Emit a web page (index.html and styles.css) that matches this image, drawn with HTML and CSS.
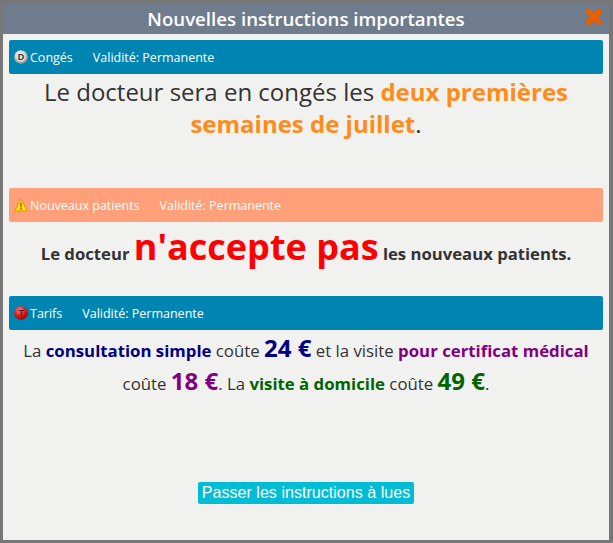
FILE: index.html
```html
<!DOCTYPE html>
<html lang="fr">
<head>
<meta charset="utf-8">
<title>Nouvelles instructions importantes</title>
<link rel="stylesheet" href="styles.css">
</head>
<body>
<div class="modal">
  <header class="title-bar">
    <h1 class="title">Nouvelles instructions importantes</h1>
    <svg class="close" viewBox="0 0 22 22" width="22" height="22" aria-label="Fermer">
      <path d="M2.5 6 L6 2.5 L11 7.5 L16 2.5 L19.5 6 L14.5 11 L19.5 16 L16 19.5 L11 14.5 L6 19.5 L2.5 16 L7.5 11 Z" fill="#ee5f00" stroke="#c9651f" stroke-width="1.2" stroke-linejoin="round"/>
    </svg>
  </header>
  <main class="content">
    <section class="notice notice-first">
      <div class="bar bar-blue">
        <span class="label">
          <svg class="ico" viewBox="0 0 14 14" width="14" height="14"><defs><radialGradient id="g1" cx="40%" cy="30%" r="75%"><stop offset="0" stop-color="#ffffff"/><stop offset="1" stop-color="#8f8f8f"/></radialGradient></defs><circle cx="7" cy="7" r="6.8" fill="url(#g1)"/><circle cx="7" cy="7" r="4.5" fill="#e4e4e4"/><text x="7" y="10.2" class="ico-letter">D</text></svg>
          Congés
        </span>
        <span class="validity">Validité: Permanente</span>
      </div>
      <p class="msg msg-large">Le docteur sera en congés les <strong class="orange">deux premières semaines de juillet</strong>.</p>
    </section>
    <section class="notice notice-second">
      <div class="bar bar-salmon">
        <span class="label">
          <svg class="ico" viewBox="0 0 14 14" width="14" height="14"><path d="M7 1 L13.4 13 H0.6 Z" fill="#ffe000" stroke="#ea8f10" stroke-width="1" stroke-linejoin="round"/><path d="M6.3 5 H7.7 L7.4 9.5 H6.6 Z M6.3 10.3 H7.7 V11.7 H6.3 Z" fill="#6b4a00"/></svg>
          Nouveaux patients
        </span>
        <span class="validity">Validité: Permanente</span>
      </div>
      <p class="msg msg-bold">Le docteur <span class="huge">n'accepte pas</span> les nouveaux patients.</p>
    </section>
    <section class="notice">
      <div class="bar bar-blue">
        <span class="label">
          <svg class="ico" viewBox="0 0 14 14" width="14" height="14"><defs><radialGradient id="g2" cx="40%" cy="30%" r="75%"><stop offset="0" stop-color="#ff7a7a"/><stop offset="0.6" stop-color="#e01010"/><stop offset="1" stop-color="#8c0808"/></radialGradient></defs><circle cx="7" cy="7" r="6.8" fill="url(#g2)"/><text x="7" y="10.2" class="ico-letter">T</text></svg>
          Tarifs
        </span>
        <span class="validity">Validité: Permanente</span>
      </div>
      <p class="msg msg-prices">La <strong class="navy">consultation simple</strong> coûte <strong class="price navy">24 €</strong> et la visite <strong class="purple">pour certificat médical</strong> coûte <strong class="price purple">18 €</strong>. La <strong class="green">visite à domicile</strong> coûte <strong class="price green">49 €</strong>.</p>
    </section>
    <div class="actions">
      <button class="skip" type="button">Passer les instructions à lues</button>
    </div>
  </main>
</div>
</body>
</html>
```
FILE: styles.css
```css
* { box-sizing: border-box; }
html, body { height: 100%; }
body {
  margin: 0;
  background: #777777;
  padding: 3px 4px 3px 3px;
  font-family: "Open Sans", "Noto Sans", sans-serif;
  overflow: hidden;
}
.modal {
  height: 100%;
  display: flex;
  flex-direction: column;
  background: #f1f1f0;
}
.title-bar {
  position: relative;
  height: 31px;
  flex: none;
  background: #6f7c8d;
  display: flex;
  align-items: center;
  justify-content: center;
}
.title {
  margin: 0;
  font-size: 18.67px;
  font-weight: 600;
  color: #ffffff;
  line-height: 30px;
}
.close {
  position: absolute;
  right: 4px;
  top: 3px;
}
.content {
  flex: 1;
  display: flex;
  flex-direction: column;
  padding: 6px 6px 0;
}
.bar {
  height: 34px;
  display: flex;
  align-items: center;
  padding-left: 5px;
  border-radius: 2px;
  color: #ffffff;
  font-size: 12.5px;
  font-weight: 500;
}
.bar-blue { background: #0085b2; }
.bar-salmon { background: #ffa07a; }
.label { display: flex; align-items: center; gap: 2px; }
.validity { margin-left: 20px; }
.ico { display: block; flex: none; }
.ico-letter {
  font-family: "Liberation Sans", sans-serif;
  font-size: 9px;
  font-weight: 700;
  fill: #333333;
  text-anchor: middle;
}
.notice-first { height: 148px; }
.notice-second { height: 108px; }
.msg { margin: 0; text-align: center; color: #333333; }
.msg-large {
  font-size: 24px;
  line-height: 32px;
  padding: 2px 20px 0;
}
.msg-bold {
  font-size: 16.7px;
  font-weight: 700;
  line-height: 49px;
}
.huge { font-size: 36px; color: #ff0000; }
.msg-prices {
  font-size: 16.8px;
  line-height: 33px;
  padding: 4px 6px 0;
}
.price { font-size: 24px; line-height: 1; }
.orange { color: #ff8c1a; font-weight: 700; }
.navy { color: #000080; }
.purple { color: #800080; }
.green { color: #006400; }
.actions {
  margin-top: auto;
  display: flex;
  justify-content: center;
  padding-bottom: 36px;
}
.skip {
  height: 22px;
  width: 216px;
  padding: 0 0 2px;
  border: 0;
  border-radius: 2px;
  background: #00bcd4;
  color: #ffffff;
  font-family: "Liberation Sans", Arial, sans-serif;
  font-size: 16.1px;
}
```
